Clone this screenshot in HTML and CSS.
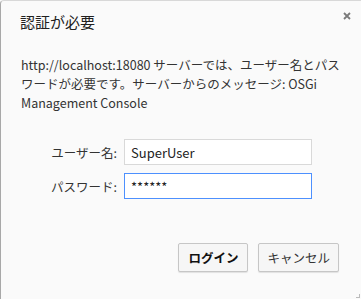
FILE: index.html
```html
<!DOCTYPE html>
<html lang="ja">

<head>
    <meta charset="UTF-8">
    <title>認証が必要</title>
    <link rel="stylesheet" href="styles.css">
</head>

<body>
    <div class="dialog">
        <div class="header">
            <div class="title">認証が必要</div>
            <div class="close">
                <svg width="8" height="8" viewBox="0 0 8 8">
                    <path d="M1 1L7 7M7 1L1 7" stroke="#7a7a7a" stroke-width="1.8" />
                </svg>
            </div>
        </div>
        <p class="message">http://localhost:18080 サーバーでは、ユーザー名とパス<br>ワードが必要です。サーバーからのメッセージ: OSGi<br>Management Console</p>
        <div class="form">
            <label>ユーザー名:</label>
            <input type="text" value="SuperUser">
            <label>パスワード:</label>
            <input type="text" class="focused" value="******">
        </div>
        <div class="buttons">
            <button class="primary">ログイン</button>
            <button>キャンセル</button>
        </div>
        <div class="grip"></div>
    </div>
</body>

</html>
```

FILE: styles.css
```css
* {
    margin: 0;
    padding: 0;
    box-sizing: border-box;
    font-family: "Noto Sans CJK JP", "Noto Sans", sans-serif;
}

body {
    width: 361px;
    height: 299px;
    background: #fafafa;
    color: #222;
}

.dialog {
    position: relative;
    height: 299px;
    background: #fafafa;
    border-left: 1px solid #a8a8a8;
    border-top: 1px solid #d8d8d8;
    border-top-left-radius: 4px;
}

.header {
    display: flex;
    justify-content: space-between;
    padding: 10px 10px 0 19px;
}

.title {
    font-size: 15px;
    line-height: 22px;
    color: #202020;
}

.close {
    padding-top: 1px;
}

.close svg {
    display: block;
}

.message {
    margin-top: 22px;
    padding-left: 20px;
    font-size: 12.5px;
    line-height: 19px;
    color: #333;
}

.form {
    display: grid;
    grid-template-columns: 103px 188px;
    column-gap: 7px;
    row-gap: 8px;
    align-items: center;
    margin-top: 27px;
    padding-left: 13px;
}

.form label {
    text-align: right;
    font-size: 12.5px;
    color: #333;
}

.form input {
    height: 26px;
    padding: 0 6px;
    border: 1px solid #d9d9d9;
    background: #fff;
    font-size: 13px;
    color: #222;
    outline: none;
}

.form input.focused {
    border-color: #4d90fe;
}

.buttons {
    display: flex;
    justify-content: flex-end;
    gap: 10px;
    margin-top: 44px;
    padding-right: 22px;
}

button {
    height: 29px;
    padding: 0 8px;
    background: #f6f6f6;
    border: 1px solid #c6c6c6;
    border-radius: 2px;
    box-shadow: 0 1px 1px rgba(0, 0, 0, 0.1);
    font-size: 12.5px;
    color: #333;
}

button.primary {
    min-width: 70px;
    font-weight: bold;
    color: #111;
}

.grip {
    position: absolute;
    right: 1px;
    bottom: 1px;
    width: 4px;
    height: 4px;
    border-right: 1px solid #bbb;
    border-bottom: 1px solid #bbb;
}
```
